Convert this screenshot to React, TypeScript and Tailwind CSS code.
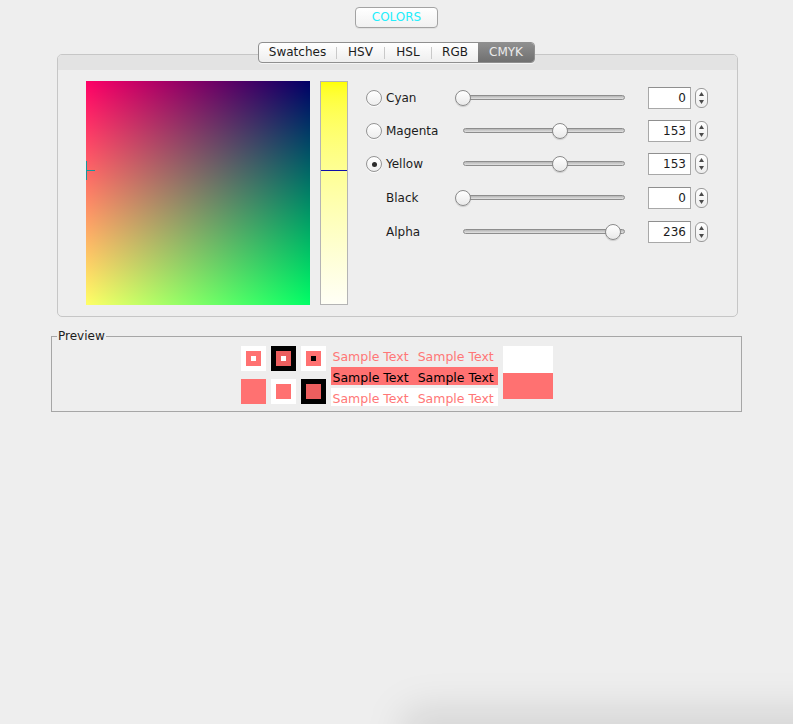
import React from 'react';

const FONT = "font-['DejaVu_Sans',sans-serif]";

interface ChannelRow {
  label: string;
  value: number;
  radio: 'on' | 'off' | null;
  height: string;
}

const ROWS: ChannelRow[] = [
  { label: 'Cyan', value: 0, radio: 'off', height: 'h-[33px]' },
  { label: 'Magenta', value: 153, radio: 'off', height: 'h-[33px]' },
  { label: 'Yellow', value: 153, radio: 'on', height: 'h-[34px]' },
  { label: 'Black', value: 0, radio: null, height: 'h-[34px]' },
  { label: 'Alpha', value: 236, radio: null, height: 'h-[34px]' },
];

const TRACK_WIDTH = 162;

function Radio({ checked }: { checked: boolean }) {
  return (
    <div className="w-[16px] h-[16px] rounded-full border border-[#949494] bg-linear-to-b from-white to-[#eeeeee] flex items-center justify-center shadow-[0_1px_0_rgba(255,255,255,0.8)]">
      {checked && <div className="w-[5px] h-[5px] rounded-full bg-[#2b2b2b]" />}
    </div>
  );
}

function Slider({ value }: { value: number }) {
  const left = (value / 255) * TRACK_WIDTH;
  return (
    <div className="relative w-[178px] h-[18px]">
      <div className="absolute left-[8px] right-[8px] top-[6px] h-[5px] rounded-full border border-[#8d8d8d] bg-linear-to-b from-[#b5b5b5] to-[#e2e2e2]" />
      <div
        className="absolute top-[1px] w-[16px] h-[16px] rounded-full border border-[#8a8a8a] bg-linear-to-b from-white to-[#e9e9e9] shadow-[0_1px_1px_rgba(0,0,0,0.15)]"
        style={{ left }}
      />
    </div>
  );
}

function Spinner() {
  return (
    <div className="w-[13px] h-[20px] rounded-[6px] border border-[#9a9a9a] bg-linear-to-b from-white to-[#ededed] flex flex-col items-center justify-between py-[3px]">
      <svg width="5" height="4" viewBox="0 0 5 4">
        <path d="M2.5 0L5 4H0z" fill="#4a4a4a" />
      </svg>
      <svg width="5" height="4" viewBox="0 0 5 4">
        <path d="M0 0h5L2.5 4z" fill="#4a4a4a" />
      </svg>
    </div>
  );
}

function ChannelControl({ row }: { row: ChannelRow }) {
  return (
    <div className={`flex items-center ${row.height}`}>
      <div className="w-[20px] flex items-center">
        {row.radio && <Radio checked={row.radio === 'on'} />}
      </div>
      <div className="w-[69px] text-[12px] text-[#1c1c1c]">{row.label}</div>
      <Slider value={row.value} />
      <div className="ml-[15px] w-[43px] h-[22px] border border-[#a8a8a8] border-t-[#8f8f8f] bg-white text-right pr-[4px] text-[12px] leading-[20px] text-[#1c1c1c]">
        {row.value}
      </div>
      <div className="ml-[4px]">
        <Spinner />
      </div>
    </div>
  );
}

function Tabs() {
  const divider = <span className="w-px h-[12px] bg-[#c9c9c9] self-center" />;
  return (
    <div className="relative z-10 ml-[258px] mt-[14px] flex h-[21px] rounded-[4px] border border-[#8f8f8f] bg-linear-to-b from-white to-[#eeeeee] overflow-hidden text-[12px] leading-[19px] text-[#1c1c1c] shadow-[0_1px_0_rgba(255,255,255,0.6)]">
      <span className="w-[77px] text-center">Swatches</span>
      {divider}
      <span className="w-[47px] text-center">HSV</span>
      {divider}
      <span className="w-[46px] text-center">HSL</span>
      {divider}
      <span className="w-[46px] text-center">RGB</span>
      <span className="w-[56px] text-center bg-linear-to-b from-[#8f8f8f] to-[#707070] text-[#ebebeb]">CMYK</span>
    </div>
  );
}

function ColorField() {
  return (
    <div className="relative w-[224px] h-[224px] bg-[#000066] bg-[image:linear-gradient(to_right,#ff0000,#000000),linear-gradient(to_bottom,#000000,#00ff00)] bg-blend-screen">
      <div className="absolute left-0 top-[89px] w-[9px] h-px bg-[#16969b]" />
      <div className="absolute left-0 top-[80px] w-px h-[19px] bg-[#16969b]" />
    </div>
  );
}

function YellowStrip() {
  return (
    <div className="relative ml-[10px] w-[28px] h-[224px] border border-[#b4b4b4] bg-linear-to-b from-[#ffff00] to-[#fffff6]">
      <div className="absolute left-0 right-0 top-[88px] h-px bg-[#1010a8]" />
    </div>
  );
}

function SampleText({ className }: { className: string }) {
  return (
    <div className={`flex h-[18px] gap-[5px] pt-[2px] leading-[17px] text-[12.5px] ${className}`}>
      <span className="px-[2px]">Sample Text</span>
      <span className="px-[2px]">Sample Text</span>
    </div>
  );
}

function Preview() {
  return (
    <div className="relative ml-[51px] mt-[19px] w-[691px] h-[76px] border border-[#a6a6a6]">
      <span className="absolute -top-[9px] left-[5px] bg-[#eeeeee] px-[1px] text-[12px] leading-[16px] text-[#1c1c1c]">
        Preview
      </span>
      <div className="flex justify-center pt-[9px]">
        <div className="grid grid-cols-[25px_25px_25px] gap-[5px]">
          <div className="w-[25px] h-[25px] bg-white p-[5px]">
            <div className="w-[15px] h-[15px] bg-[#ff7171] p-[5px]">
              <div className="w-[5px] h-[5px] bg-white" />
            </div>
          </div>
          <div className="w-[25px] h-[25px] bg-black p-[5px]">
            <div className="w-[15px] h-[15px] bg-[#ec5e5e] p-[5px]">
              <div className="w-[5px] h-[5px] bg-white" />
            </div>
          </div>
          <div className="w-[25px] h-[25px] bg-white p-[5px]">
            <div className="w-[15px] h-[15px] bg-[#ff7171] p-[5px]">
              <div className="w-[5px] h-[5px] bg-black" />
            </div>
          </div>
          <div className="w-[25px] h-[25px] bg-[#ff7171]" />
          <div className="w-[25px] h-[25px] bg-white p-[5px]">
            <div className="w-[15px] h-[15px] bg-[#ff7171]" />
          </div>
          <div className="w-[25px] h-[25px] bg-black p-[5px]">
            <div className="w-[15px] h-[15px] bg-[#ec5e5e]" />
          </div>
        </div>
        <div className="ml-[5px] w-[167px] flex flex-col gap-[3px]">
          <SampleText className="text-[#ff7777]" />
          <SampleText className="bg-[#ff7171] text-black" />
          <SampleText className="bg-white text-[#ff7777]" />
        </div>
        <div className="ml-[5px] w-[50px] flex flex-col">
          <div className="h-[27px] bg-white" />
          <div className="h-[26px] bg-[#ff7171]" />
        </div>
      </div>
    </div>
  );
}

export default function App() {
  return (
    <div className={`relative min-h-screen h-[724px] w-full overflow-hidden bg-[#eeeeee] ${FONT}`}>
      <div className="flex flex-col items-start">
        <button className="ml-[355px] mt-[7px] w-[83px] h-[21px] rounded-[4px] border border-[#a3a3a3] bg-linear-to-b from-white to-[#f1f1f1] text-[12px] leading-[19px] text-[#22eefc] shadow-[0_1px_0_rgba(0,0,0,0.05)]">
          COLORS
        </button>

        <Tabs />

        <div className="ml-[57px] -mt-[9px] w-[681px] h-[263px] rounded-[5px] border border-[#c6c6c6] bg-[#eeeeee] overflow-hidden">
          <div className="h-[15px] bg-[#e3e3e3]" />
          <div className="flex pt-[11px] pl-[28px]">
            <ColorField />
            <YellowStrip />
            <div className="ml-[18px] flex flex-col">
              {ROWS.map((row) => (
                <ChannelControl key={row.label} row={row} />
              ))}
            </div>
          </div>
        </div>

        <Preview />
      </div>

      {/* window shadow peeking in at the bottom right */}
      <div className="absolute -bottom-[30px] left-[400px] -right-[60px] h-[46px] rounded-full bg-black/10 blur-[18px]" />
    </div>
  );
}
